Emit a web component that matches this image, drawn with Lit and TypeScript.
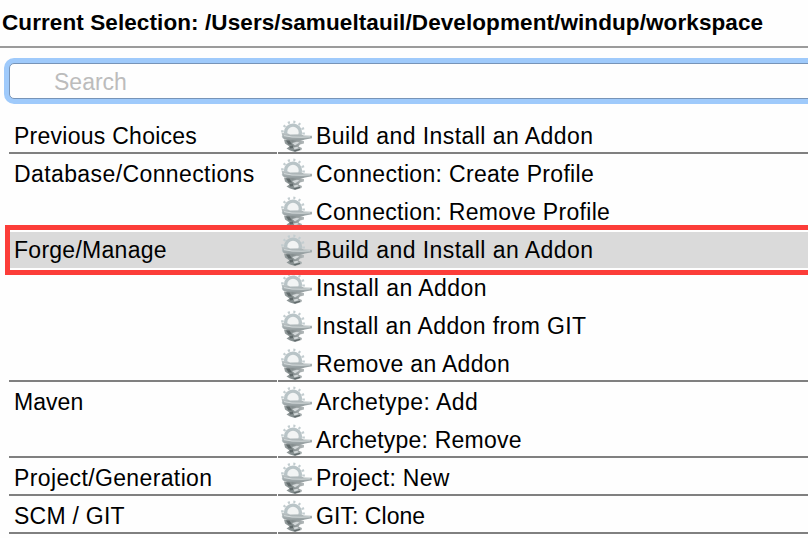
import { LitElement, html, css } from "lit";
import { customElement } from "lit/decorators.js";
import { classMap } from "lit/directives/class-map.js";

interface Label {
  text: string;
  /** Extra space after each letter, in pixels. */
  tracking: number;
}
interface Command extends Label {
  selected?: boolean;
}
interface Category extends Label {
  commands: Command[];
}

const CATEGORIES: Category[] = [
  { text: "Previous Choices", tracking: 0.26, commands: [{ text: "Build and Install an Addon", tracking: 0.44 }] },
  {
    text: "Database/Connections",
    tracking: 0.4,
    commands: [
      { text: "Connection: Create Profile", tracking: 0.32 },
      { text: "Connection: Remove Profile", tracking: 0.3 },
    ],
  },
  {
    text: "Forge/Manage",
    tracking: 0.27,
    commands: [
      { text: "Build and Install an Addon", tracking: 0.44, selected: true },
      { text: "Install an Addon", tracking: 0.46 },
      { text: "Install an Addon from GIT", tracking: 0.39 },
      { text: "Remove an Addon", tracking: 0.32 },
    ],
  },
  {
    text: "Maven",
    tracking: 0.05,
    commands: [
      { text: "Archetype: Add", tracking: 0.44 },
      { text: "Archetype: Remove", tracking: 0.22 },
    ],
  },
  { text: "Project/Generation", tracking: 0.37, commands: [{ text: "Project: New", tracking: 0.27 }] },
  { text: "SCM / GIT", tracking: 0.25, commands: [{ text: "GIT: Clone", tracking: 0.05 }] },
];

/** Gear rising behind an anvil. */
@customElement("forge-icon")
export class ForgeIcon extends LitElement {
  static styles = css`
    :host { display: block; width: 34px; height: 34px; }
    svg { display: block; filter: blur(0.5px); }
  `;
  render() {
    return html`<svg width="34" height="34" viewBox="0 0 34 34">
      <defs>
        <linearGradient id="top" x1="0" y1="0" x2="0" y2="1">
          <stop offset="0" stop-color="#c0c8ca" />
          <stop offset=".5" stop-color="#a6afb1" />
          <stop offset="1" stop-color="#8d9698" />
        </linearGradient>
        <linearGradient id="body" x1="0" y1="0" x2="1" y2="0">
          <stop offset="0" stop-color="#949c9d" />
          <stop offset=".45" stop-color="#858e8f" />
          <stop offset="1" stop-color="#b4babb" />
        </linearGradient>
      </defs>
      <circle cx="13" cy="12.5" r="10.6" fill="none" stroke="#c3cdd0" stroke-width="2.6" stroke-dasharray="2.1 3.45" />
      <circle cx="13" cy="12.5" r="7.4" fill="#f2f4f4" stroke="#b9c4c7" stroke-width="3.4" />
      <path d="M1.5 12.5 L8 13.4 L10 14.6 L21 14.2 L24 15.4 L32 15.8 L32 18.2 L25 19.6 L20 21 L10 21 L6 19.5 L3 18.5 Z" fill="url(#top)" />
      <path d="M4 15.6 L12 17 L22 17.2 L30 16.8" fill="none" stroke="#d6dcdd" stroke-width="1" />
      <path d="M4 19.5 L10 20 L19 20.5 L24 21 L24 23.5 L20 24.5 L18.5 26.5 L22 28 L21.5 30 L15 32 L10 30.5 L6.5 28.5 L9.5 26.5 L5 23.5 Z" fill="url(#body)" />
      <path d="M6 20.5 L9.5 20.5 L12 24.5 L8.5 24.5 Z M9.5 26 L13 25.5 L13 28 L10 28.5 Z M13 30.4 L20 28.8 L20 30 L15 31.5 Z" fill="#616a6b" />
      <path d="M12 23 L17 21.8 L19.5 22.5 L15 25.5 Z M13.5 27.5 L17.5 26.8 L18.5 28.2 L14.5 29.5 Z" fill="#d3d8d9" />
    </svg>`;
  }
}

@customElement("app-root")
export class AppRoot extends LitElement {
  static styles = css`
    :host {
      display: block;
      width: 100%;
      height: 538px;
      overflow: hidden;
      background: #fefefe;
      color: #000;
      font: 23px "Liberation Sans", Arial, sans-serif;
      white-space: nowrap;
    }
    .title {
      box-sizing: border-box;
      height: 48px;
      padding-left: 2px;
      border-bottom: 2px solid #9b9b9b;
      font-size: 22.5px;
      font-weight: 700;
      letter-spacing: 0.09px;
      line-height: 45px;
    }
    .search {
      box-sizing: border-box;
      height: 36px;
      margin: 15px -10px 17px 9px;
      border: 1px solid #7794b8;
      border-radius: 5px;
      box-shadow: 0 0 0 5px #9fcafb;
      padding-left: 44px;
      background: #fefefe;
      color: #bcbcbc;
      line-height: 36px;
    }
    .category {
      display: grid;
      grid-template-columns: 268px 1fr;
      grid-template-rows: 100%;
      column-gap: 1px;
      height: calc(var(--rows) * 38px);
      margin-left: 9px;
    }
    .name-cell,
    .commands {
      box-sizing: border-box;
      border-bottom: 2px solid #808080;
    }
    .name,
    .command {
      height: 38px;
      line-height: 40px;
    }
    .name { padding-left: 5px; }
    .command { display: flex; gap: 2px; padding-left: 2px; }
    .command forge-icon { margin-top: 4px; }
    .label { letter-spacing: calc(var(--tracking) * 1px); }
    .selectable { position: relative; z-index: 0; }
    .highlight {
      position: absolute;
      z-index: -1;
      left: 0;
      right: 0;
      top: 2px;
      height: 36px;
      background: #dadada;
    }
    .marker {
      position: absolute;
      box-sizing: border-box;
      left: -4px;
      right: -20px;
      top: -5px;
      height: 50px;
      border: 5px solid #fc3d39;
    }
  `;

  private label(l: Label) {
    return html`<span class="label" style="--tracking:${l.tracking}">${l.text}</span>`;
  }

  private category(c: Category) {
    const selected = c.commands.some((k) => k.selected);
    return html`<section class=${classMap({ category: true, selectable: selected })} style="--rows:${c.commands.length}">
      ${selected ? html`<div class="highlight"></div>` : null}
      <div class="name-cell"><div class="name">${this.label(c)}</div></div>
      <div class="commands">
        ${c.commands.map((k) => html`<div class="command"><forge-icon></forge-icon>${this.label(k)}</div>`)}
      </div>
      ${selected ? html`<div class="marker"></div>` : null}
    </section>`;
  }

  render() {
    return html`
      <header class="title">Current Selection: /Users/samueltauil/Development/windup/workspace</header>
      <div class="search">Search</div>
      <main>${CATEGORIES.map((c) => this.category(c))}</main>
    `;
  }
}
